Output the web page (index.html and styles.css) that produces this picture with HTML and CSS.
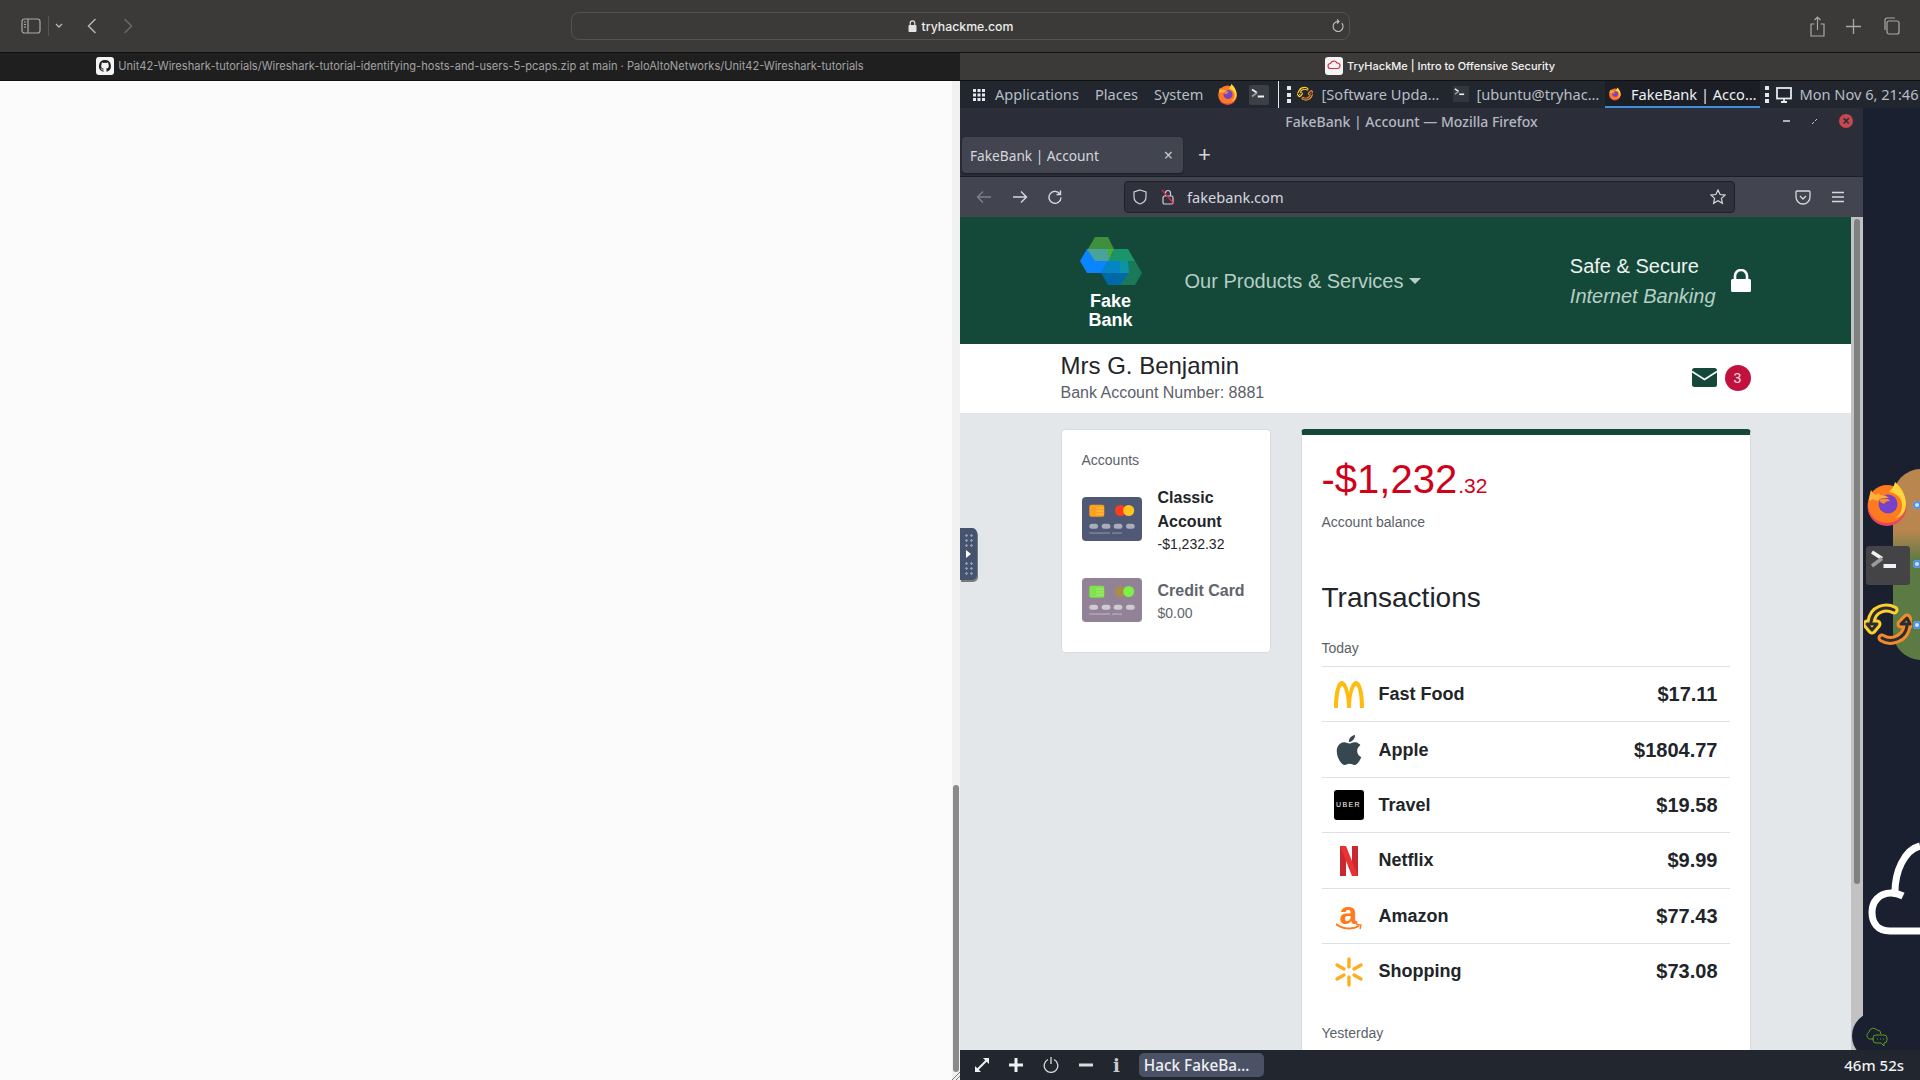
FILE: index.html
```html
<!DOCTYPE html>
<html lang="en">
<head>
    <meta charset="UTF-8">
    <meta name="viewport" content="width=device-width, initial-scale=1.0">
    <title>FakeBank | Account</title>
    <link rel="stylesheet" href="styles.css">
</head>
<body>
    <svg class="defs" width="0" height="0">
        <symbol id="firefox" viewBox="0 0 42 44">
            <circle cx="20" cy="24.500" r="19.500" fill="#e8475f"/>
            <circle cx="20" cy="22" r="19" fill="#ff7a1f"/>
            <path d="M28 0c-1 5-4 8-6 10 8 1 14 7 13 15-.5 5-3 9-7 11 7-1 11-7 11-14 0-9-5-17-11-22z" fill="#ffd53d"/>
            <circle cx="21" cy="22" r="9.500" fill="#7542c9"/>
            <path d="M4 8c-1 3-2 7-2 11 3-2 5-2 8 0 3-3 8-4 12-3-2-2-5-3-9-3l-1-2-3 2c-2-1-4-3-5-5z" fill="#ffb03a"/>
            <path d="M12 18c4-2 9-2 11 1-3 0-5 1-6 3-2-1-4-2-5-4z" fill="#ff8a24"/>
        </symbol>
        <symbol id="term" viewBox="0 0 36 28">
            <path d="M2 2l10 6.500" fill="none" stroke="#f2f2f2" stroke-width="3.600"/>
            <path d="M12 8.500L2 16" fill="none" stroke="#9a9a9a" stroke-width="3.600"/>
            <rect x="13.500" y="14" width="12.500" height="4" fill="#f2f2f2"/>
        </symbol>
        <symbol id="sync" viewBox="0 0 48 44">
            <g fill="none" stroke="#ffcf2e" stroke-width="9" stroke-linejoin="round" stroke-linecap="round">
                <path d="M30 7C22 3 9 5 7 19"/>
                <path d="M3 21l5 6 5-6z"/>
            </g>
            <g fill="none" stroke="#f58a2c" stroke-width="9" stroke-linejoin="round" stroke-linecap="round">
                <path d="M18 35c8 5 23 2 25-12"/>
                <path d="M37 21l6-6 3 6z"/>
            </g>
            <g fill="none" stroke="#2b2d33" stroke-width="3" stroke-linejoin="round" stroke-linecap="round">
                <path d="M30 7C22 3 9 5 7 19"/>
                <path d="M3 21l5 6 5-6z"/>
                <path d="M18 35c8 5 23 2 25-12"/>
                <path d="M37 21l6-6 3 6z"/>
            </g>
        </symbol>
    </svg>

    <header class="safari-bar">
        <div class="safari-left">
            <svg class="ic-sidebar" width="20" height="16" viewBox="0 0 20 16" fill="none" stroke="#a9a8a5" stroke-width="1.2"><rect x="1" y="1" width="18" height="14" rx="2.5"/><path d="M7 1v14M3 4h2M3 6.5h2M3 9h2"/></svg>
            <span class="safari-sep"></span>
            <svg width="8" height="6" viewBox="0 0 8 6" fill="none" stroke="#b4b3b0" stroke-width="1.4"><path d="M1 1l3 3 3-3"/></svg>
            <svg class="ic-back" width="10" height="16" viewBox="0 0 10 16" fill="none" stroke="#b4b3b0" stroke-width="1.5"><path d="M8.500 1L1.500 8l7 7"/></svg>
            <svg class="ic-forward" width="10" height="16" viewBox="0 0 10 16" fill="none" stroke="#6a6967" stroke-width="1.5"><path d="M1.500 1l7 7-7 7"/></svg>
        </div>
        <div class="safari-url">
            <svg width="9" height="12" viewBox="0 0 9 12" fill="none"><rect x="0.500" y="5" width="8" height="7" rx="1" fill="#e4e4e2"/><path d="M2.200 5V3.200a2.300 2.300 0 0 1 4.600 0V5" stroke="#e4e4e2" stroke-width="1.100"/></svg>
            <span class="safari-host">tryhackme.com</span>
            <svg class="ic-reload" width="12" height="14" viewBox="0 0 12 14" fill="none" stroke="#c4c3c0" stroke-width="1.100"><path d="M9.800 4.200A5 5 0 1 1 6 2.500"/><path d="M5 .5l2 2-2 2"/></svg>
        </div>
        <div class="safari-right">
            <svg width="15" height="21" viewBox="0 0 15 21" fill="none" stroke="#a9a8a5" stroke-width="1.200"><path d="M4.500 8H1v12h13V8h-3.500M7.500 14V1M4.500 4l3-3 3 3"/></svg>
            <svg width="15" height="15" viewBox="0 0 15 15" fill="none" stroke="#a9a8a5" stroke-width="1.300"><path d="M7.500 0v15M0 7.500h15"/></svg>
            <svg width="18" height="18" viewBox="0 0 18 18" fill="none" stroke="#a9a8a5" stroke-width="1.200"><rect x="5" y="4" width="12" height="13" rx="2"/><path d="M3 13V3a2 2 0 0 1 2-2h8"/></svg>
        </div>
    </header>

    <div class="safari-tabs">
        <div class="stab stab-dark">
            <span class="gh-icon">
                <svg width="12" height="12" viewBox="0 0 16 16" fill="#1f1f1f"><path d="M8 0a8 8 0 0 0-2.500 15.600c.4.100.5-.2.500-.4v-1.400c-2.200.5-2.700-1-2.700-1-.4-.9-.9-1.200-.9-1.200-.7-.5.100-.5.100-.5.800.1 1.200.8 1.200.8.700 1.200 1.900.9 2.300.7.100-.5.300-.9.500-1.100-1.800-.2-3.600-.9-3.600-4 0-.9.300-1.600.8-2.100-.1-.2-.4-1 .1-2.100 0 0 .7-.2 2.200.8a7.600 7.600 0 0 1 4 0c1.500-1 2.200-.8 2.200-.8.400 1.100.2 1.900.1 2.100.5.600.8 1.300.8 2.100 0 3.100-1.900 3.700-3.700 3.900.3.300.6.800.6 1.500v2.200c0 .2.100.5.600.4A8 8 0 0 0 8 0z"/></svg>
            </span>
            <span>Unit42-Wireshark-tutorials/Wireshark-tutorial-identifying-hosts-and-users-5-pcaps.zip at main · PaloAltoNetworks/Unit42-Wireshark-tutorials</span>
        </div>
        <div class="stab stab-light">
            <span class="thm-icon">
                <svg width="14" height="14" viewBox="0 0 14 14" fill="none" stroke="#d2333f" stroke-width="1.200"><path d="M3.500 9.500a2.500 2.500 0 0 1 0-5 3.500 3.500 0 0 1 6.500-.5 2.700 2.700 0 0 1 .5 5.500z"/></svg>
            </span>
            <span>TryHackMe | Intro to Offensive Security</span>
        </div>
    </div>

    <main class="split">
        <section class="left-pane">
            <div class="left-scroll"><div class="left-thumb"></div></div>
            <svg class="grip" width="8" height="8" viewBox="0 0 8 8" stroke="#555" stroke-width="0.800"><path d="M0 8l8-8M4 8l4-4"/></svg>
        </section>

        <section class="vm">
            <div class="panel">
                <div class="panel-menu">
                    <svg width="12" height="12" viewBox="0 0 12 12" fill="#e6e8ec"><rect width="3" height="3"/><rect x="4.500" width="3" height="3"/><rect x="9" width="3" height="3"/><rect y="4.500" width="3" height="3"/><rect x="4.500" y="4.500" width="3" height="3"/><rect x="9" y="4.500" width="3" height="3"/><rect y="9" width="3" height="3"/><rect x="4.500" y="9" width="3" height="3"/><rect x="9" y="9" width="3" height="3"/></svg>
                    <span class="pm-item">Applications</span>
                    <span class="pm-item">Places</span>
                    <span class="pm-item">System</span>
                    <svg class="pm-ff" width="20" height="21"><use href="#firefox"/></svg>
                    <span class="pm-term"><svg width="19" height="15"><use href="#term"/></svg></span>
                </div>
                <span class="panel-div"></span>
                <span class="handle"></span>
                <div class="task task-first">
                    <svg width="16" height="16"><use href="#sync"/></svg>
                    <span>[Software Upda…</span>
                </div>
                <div class="task">
                    <span class="task-term"><svg width="14" height="11"><use href="#term"/></svg></span>
                    <span>[ubuntu@tryhac…</span>
                </div>
                <div class="task task-active">
                    <svg width="17" height="18"><use href="#firefox"/></svg>
                    <span>FakeBank | Acco…</span>
                </div>
                <span class="handle handle-end"></span>
                <svg class="monitor" width="16" height="16" viewBox="0 0 16 16" fill="none" stroke="#e6e8ec" stroke-width="1.800"><rect x="1" y="1" width="14" height="10.500"/><path d="M5 15h6M8 12v3"/></svg>
                <span class="clock">Mon Nov 6, 21:46</span>
            </div>

            <div class="desktop">
                <div class="ff-window">
                    <div class="ff-title">
                        <span>FakeBank | Account — Mozilla Firefox</span>
                        <div class="ff-controls">
                            <span class="ctl-min"></span>
                            <svg width="7" height="7" viewBox="0 0 7 7" stroke="#c5c8d0" fill="none"><path d="M1 6l2-2M6 1L4 3"/></svg>
                            <span class="ctl-close">×</span>
                        </div>
                    </div>
                    <div class="ff-tabs">
                        <div class="ff-tab"><span>FakeBank | Account</span><span class="ff-tab-x">×</span></div>
                        <span class="ff-plus">+</span>
                    </div>
                    <div class="ff-nav">
                        <svg width="16" height="14" viewBox="0 0 16 14" fill="none" stroke="#7c808c" stroke-width="1.400"><path d="M15 7H2M7 1.500L1.500 7 7 12.500"/></svg>
                        <svg width="16" height="14" viewBox="0 0 16 14" fill="none" stroke="#d6d8de" stroke-width="1.400"><path d="M1 7h13M9 1.500L14.500 7 9 12.500"/></svg>
                        <svg width="14" height="14" viewBox="0 0 14 14" fill="none" stroke="#d6d8de" stroke-width="1.400"><path d="M12 4A6 6 0 1 0 13 7.500"/><path d="M12.500 .5v4h-4"/></svg>
                        <div class="ff-url">
                            <svg width="14" height="16" viewBox="0 0 14 16" fill="none" stroke="#cfd1d8" stroke-width="1.200"><path d="M7 1l6 2v5c0 3.500-3 6-6 7-3-1-6-3.500-6-7V3z"/></svg>
                            <svg class="ic-lock" width="14" height="16" viewBox="0 0 14 16" fill="none" stroke="#cfd1d8" stroke-width="1.200"><rect x="2" y="7" width="10" height="8" rx="1.500"/><path d="M4.500 7V4a2.500 2.500 0 0 1 5 0v3"/><path d="M1 1l12 14" stroke="#e0284f"/></svg>
                            <span class="ff-host">fakebank.com</span>
                            <svg class="ic-star" width="16" height="16" viewBox="0 0 16 16" fill="none" stroke="#d6d8de" stroke-width="1.200"><path d="M8 1l2.100 4.500 4.900.6-3.600 3.300 1 4.900L8 11.800 3.600 14.300l1-4.900L1 6.100l4.900-.6z"/></svg>
                        </div>
                        <svg class="ic-pocket" width="16" height="15" viewBox="0 0 16 15" fill="none" stroke="#d6d8de" stroke-width="1.300"><path d="M2 1h12a1 1 0 0 1 1 1v5a7 7 0 0 1-14 0V2a1 1 0 0 1 1-1z"/><path d="M5 6l3 3 3-3"/></svg>
                        <svg width="14" height="12" viewBox="0 0 14 12" stroke="#d6d8de" stroke-width="1.300"><path d="M1 1.500h12M1 6h12M1 10.500h12"/></svg>
                    </div>

                    <div class="ff-view">
                        <div class="page">
                            <div class="bank-head">
                                <div class="wrap head-row">
                                    <div class="brand">
                                        <svg class="brand-logo" width="64" height="49" viewBox="0 0 64 49">
                                            <polygon points="9,12 16,0 29,0 35,12 29,24 16,24" fill="#3f8f3c"/>
                                            <polygon points="1,24 8,12 29,12 35,24 29,36 8,36" fill="#0a84ff"/>
                                            <polygon points="8,12 29,12 35,12 29,24 16,24" fill="#4aa29c"/>
                                            <polygon points="29,12 35,12 29,24" fill="#4fae30"/>
                                            <polygon points="29,12 49,12 56,24 50,36 30,24 35,12" fill="#1a9468"/>
                                            <polygon points="22,36 29,24 49,24 57,36 50,48 29,48" fill="#0069a8"/>
                                            <polygon points="29,24 49,24 41,36 22,36" fill="#0585c4"/>
                                            <polygon points="41,24 49,24 56,36 50,36 41,36" fill="#0c93a8"/>
                                            <polygon points="49,24 56,24 63,36 56,48 41,48 50,36" fill="#1a7a58"/>
                                        </svg>
                                        <div class="brand-name">Fake<br>Bank</div>
                                    </div>
                                    <div class="products">Our Products &amp; Services<span class="caret"></span></div>
                                    <div class="secure">
                                        <div class="secure-text">
                                            <div>Safe &amp; Secure</div>
                                            <div class="secure-em">Internet Banking</div>
                                        </div>
                                        <svg width="20" height="23" viewBox="0 0 20 23" fill="none"><rect y="10" width="20" height="13" rx="1.500" fill="#fff"/><path d="M4 11V7a6 6 0 0 1 12 0v4" stroke="#fff" stroke-width="2.600"/></svg>
                                    </div>
                                </div>
                            </div>

                            <div class="user-bar">
                                <div class="wrap user-row">
                                    <div>
                                        <div class="user-name">Mrs G. Benjamin</div>
                                        <div class="user-acc">Bank Account Number: 8881</div>
                                    </div>
                                    <div class="messages">
                                        <svg width="25" height="19" viewBox="0 0 25 19"><rect width="25" height="19" rx="2.500" fill="#14493a"/><path d="M0 3.500l12.500 8 12.500-8" fill="none" stroke="#fff" stroke-width="1.600"/></svg>
                                        <span class="badge">3</span>
                                    </div>
                                </div>
                            </div>

                            <div class="wrap main-row">
                                <aside class="accounts">
                                    <div class="accounts-title">Accounts</div>
                                    <div class="account">
                                        <svg class="card-ic" width="60" height="44" viewBox="0 0 60 44">
                                            <rect width="60" height="44" rx="4" fill="#4f5874"/>
                                            <rect x="7.300" y="7.700" width="15" height="12" rx="2" fill="#ff9f1c"/>
                                            <path d="M14 11h8M14 14h8M14 17h8" stroke="#ffc94d"/>
                                            <circle cx="38.500" cy="13.500" r="5.500" fill="#ff3d1f"/>
                                            <circle cx="46.700" cy="13.500" r="5.500" fill="#ffc41f"/>
                                            <rect x="7.300" y="26.700" width="8.700" height="5" rx="2.500" fill="#a9adb8"/>
                                            <rect x="19.700" y="26.700" width="8.700" height="5" rx="2.500" fill="#a9adb8"/>
                                            <rect x="31.700" y="26.700" width="8.700" height="5" rx="2.500" fill="#a9adb8"/>
                                            <rect x="44" y="26.700" width="8.700" height="5" rx="2.500" fill="#a9adb8"/>
                                            <rect x="7.300" y="35.300" width="20.700" height="1.500" fill="#7f8598"/>
                                            <rect x="30" y="35.300" width="10" height="1.500" fill="#7f8598"/>
                                        </svg>
                                        <div>
                                            <div class="account-name">Classic Account</div>
                                            <div class="account-bal">-$1,232.32</div>
                                        </div>
                                    </div>
                                    <div class="account account-off">
                                        <svg class="card-ic" width="60" height="44" viewBox="0 0 60 44">
                                            <rect width="60" height="44" rx="4" fill="#918296"/>
                                            <rect x="7.300" y="7.700" width="15" height="12" rx="2" fill="#7fe34a"/>
                                            <path d="M14 11h8M14 14h8M14 17h8" stroke="#a6ee7c"/>
                                            <circle cx="38.500" cy="13.500" r="5.500" fill="#a98c48"/>
                                            <circle cx="46.700" cy="13.500" r="5.500" fill="#7dee4a"/>
                                            <rect x="7.300" y="26.700" width="8.700" height="5" rx="2.500" fill="#cfc9d2"/>
                                            <rect x="19.700" y="26.700" width="8.700" height="5" rx="2.500" fill="#cfc9d2"/>
                                            <rect x="31.700" y="26.700" width="8.700" height="5" rx="2.500" fill="#cfc9d2"/>
                                            <rect x="44" y="26.700" width="8.700" height="5" rx="2.500" fill="#cfc9d2"/>
                                            <rect x="7.300" y="35.300" width="20.700" height="1.500" fill="#b3a9b8"/>
                                            <rect x="30" y="35.300" width="10" height="1.500" fill="#b3a9b8"/>
                                        </svg>
                                        <div>
                                            <div class="account-name">Credit Card</div>
                                            <div class="account-bal">$0.00</div>
                                        </div>
                                    </div>
                                </aside>

                                <section class="ledger">
                                    <div class="balance">-$1,232<small>.32</small></div>
                                    <div class="balance-label">Account balance</div>
                                    <h2 class="ledger-title">Transactions</h2>
                                    <div class="day">Today</div>
                                    <div class="tx">
                                        <svg class="tx-ic" width="30" height="27" viewBox="0 0 30 27"><path d="M0 27C0 10 3 0 8 0c3 0 6 5 7 12 1-7 4-12 7-12 5 0 8 10 8 27h-4C26 15 24 5 22 5c-2 0-5 9-5 22h-4C13 14 10 5 8 5 6 5 4 15 4 27z" fill="#ffbc0d"/></svg>
                                        <span class="tx-name">Fast Food</span>
                                        <span class="tx-amt">$17.11</span>
                                    </div>
                                    <div class="tx">
                                        <svg class="tx-ic" width="30" height="30" viewBox="0 0 24 24"><path d="M12.152 6.896c-.948 0-2.415-1.078-3.960-1.040-2.040.027-3.910 1.183-4.961 3.014-2.117 3.675-.546 9.103 1.519 12.090 1.013 1.454 2.208 3.090 3.792 3.039 1.520-.065 2.090-.987 3.935-.987 1.831 0 2.350.987 3.960.948 1.637-.026 2.676-1.480 3.676-2.948 1.156-1.688 1.636-3.325 1.662-3.415-.039-.013-3.182-1.221-3.220-4.857-.026-3.040 2.480-4.494 2.597-4.559-1.429-2.090-3.623-2.324-4.390-2.376-2-.156-3.675 1.090-4.610 1.090zM15.530 3.830c.843-1.012 1.400-2.427 1.245-3.830-1.207.052-2.662.805-3.532 1.818-.780.896-1.454 2.338-1.273 3.714 1.338.104 2.715-.688 3.559-1.701" fill="#36474f"/></svg>
                                        <span class="tx-name">Apple</span>
                                        <span class="tx-amt">$1804.77</span>
                                    </div>
                                    <div class="tx">
                                        <span class="tx-ic uber">UBER</span>
                                        <span class="tx-name">Travel</span>
                                        <span class="tx-amt">$19.58</span>
                                    </div>
                                    <div class="tx">
                                        <svg class="tx-ic" width="30" height="30" viewBox="0 0 30 30"><rect x="6" width="6" height="30" fill="#c62a30"/><rect x="18" width="6" height="30" fill="#c62a30"/><polygon points="6,0 12,0 24,30 18,30" fill="#ea3232"/></svg>
                                        <span class="tx-name">Netflix</span>
                                        <span class="tx-amt">$9.99</span>
                                    </div>
                                    <div class="tx">
                                        <span class="tx-ic amazon">a<svg class="amazon-smile" width="26" height="8" viewBox="0 0 26 8" fill="none" stroke="#ff7a1c" stroke-width="1.800"><path d="M0 1c6 5 16 6 23 2"/><path d="M20 1.500l5 .5-1 4" stroke-width="1.400"/></svg></span>
                                        <span class="tx-name">Amazon</span>
                                        <span class="tx-amt">$77.43</span>
                                    </div>
                                    <div class="tx">
                                        <svg class="tx-ic" width="30" height="30" viewBox="0 0 30 30" stroke="#ffad1f" stroke-width="3.400" stroke-linecap="round"><path d="M15 2v8M15 20v8M3 8l7 4M20 18l7 4M27 8l-7 4M10 18l-7 4"/></svg>
                                        <span class="tx-name">Shopping</span>
                                        <span class="tx-amt">$73.08</span>
                                    </div>
                                    <div class="day day-next">Yesterday</div>
                                </section>
                            </div>

                            <div class="side-handle">
                                <span class="side-dots"></span>
                                <span class="side-arrow"></span>
                                <span class="side-dots"></span>
                            </div>
                        </div>
                        <div class="page-scroll"><div class="page-thumb"></div></div>
                    </div>
                </div>

                <aside class="dock">
                    <div class="dock-blob"></div>
                    <svg class="dock-ff" width="42" height="44"><use href="#firefox"/></svg>
                    <span class="dock-term"><svg width="36" height="28"><use href="#term"/></svg></span>
                    <svg class="dock-sync" width="48" height="44"><use href="#sync"/></svg>
                    <span class="dock-dot dot-a"></span>
                    <span class="dock-dot dot-b"></span>
                    <span class="dock-dot dot-c"></span>
                    <svg class="dock-cloud" width="52" height="94" viewBox="0 0 52 94" fill="none" stroke="#fff" stroke-width="7"><path d="M52 89H22C9 89 4 80 4 70c0-10 7-19 19-19 3 0 8 1 12 3M27 50C27 30 36 8 52 4"/></svg>
                    <div class="chat">
                        <svg width="24" height="22" viewBox="0 0 24 22" fill="none" stroke="#5c9c1e" stroke-width="1"><path d="M5 13a4 4 0 0 1 0-7 4.500 4.500 0 0 1 8-2 4 4 0 0 1 4 4M5 13h5"/><path d="M12 9h8a3 3 0 0 1 3 3v2a3 3 0 0 1-3 3v3l-3-3h-5a3 3 0 0 1-3-3v-2a3 3 0 0 1 3-3z"/><path d="M13 13h1M16 13h1M19 13h1"/></svg>
                    </div>
                </aside>
            </div>

            <div class="vm-bar">
                <svg width="16" height="16" viewBox="0 0 16 16" fill="none" stroke="#eef0f3" stroke-width="2"><path d="M2 14L14 2"/><polygon points="9,1 15,1 15,7" fill="#eef0f3" stroke="none"/><polygon points="1,9 1,15 7,15" fill="#eef0f3" stroke="none"/></svg>
                <svg class="ic-add" width="14" height="14" viewBox="0 0 14 14" stroke="#eef0f3" stroke-width="3"><path d="M7 0v14M0 7h14"/></svg>
                <svg width="16" height="16" viewBox="0 0 16 16" fill="none" stroke="#d9dbe0" stroke-width="1.300"><path d="M5 2.500a6.800 6.800 0 1 0 6 0M8 0v7"/></svg>
                <svg width="14" height="14" viewBox="0 0 14 14" stroke="#d9dbe0" stroke-width="3"><path d="M0 7h14"/></svg>
                <span class="vm-info">i</span>
                <span class="vm-pill">Hack FakeBa…</span>
                <span class="vm-time">46m 52s</span>
            </div>
        </section>
    </main>
</body>
</html>
```

FILE: styles.css
```css
/* Global */
* {
    margin: 0;
    padding: 0;
    box-sizing: border-box;
}

html, body {
    height: 100%;
    overflow: hidden;
}

body {
    display: flex;
    flex-direction: column;
    font-family: 'Liberation Sans', Arial, sans-serif;
    background: #3b3a38;
}

.defs {
    position: absolute;
}

/* Safari chrome */
.safari-bar {
    height: 52px;
    display: flex;
    align-items: center;
    background: #3b3a38;
    position: relative;
}

.safari-left {
    display: flex;
    align-items: center;
    margin-left: 21px;
    width: 550px;
}

.safari-sep {
    width: 1px;
    height: 20px;
    background: #555;
    margin: 0 6px 0 7px;
}

.ic-back {
    margin-left: 24px;
}

.ic-forward {
    margin-left: 26px;
}

.safari-url {
    width: 779px;
    height: 28px;
    border: 1px solid #545350;
    border-radius: 8px;
    display: flex;
    align-items: center;
    justify-content: center;
    gap: 5px;
    position: relative;
}

.safari-host {
    color: #ececea;
    font-family: Inter, sans-serif;
    font-size: 12.300px;
    font-weight: 500;
}

.ic-reload {
    position: absolute;
    right: 5px;
    top: 6px;
}

.safari-right {
    margin-left: auto;
    margin-right: 20px;
    display: flex;
    align-items: center;
    gap: 21px;
}

.safari-tabs {
    height: 29px;
    display: flex;
    border-top: 1px solid #111;
    border-bottom: 1px solid #111;
}

.stab {
    width: 960px;
    padding-bottom: 1px;
    display: flex;
    align-items: center;
    justify-content: center;
    gap: 4px;
    font-family: Inter, sans-serif;
    font-size: 11.100px;
}

.stab-dark {
    background: #1f1f1f;
    color: #a3a3a3;
}

.stab-light {
    background: #3b3a38;
    color: #f2f2f2;
    font-weight: 500;
    font-size: 11px;
}

.gh-icon, .thm-icon {
    width: 18px;
    height: 18px;
    background: #f4f4f4;
    border-radius: 3px;
    display: flex;
    align-items: center;
    justify-content: center;
}

.split {
    flex: 1;
    display: flex;
    min-height: 0;
}

/* Left pane */
.left-pane {
    width: 960px;
    background: #fbfbfb;
    display: flex;
    justify-content: flex-end;
    position: relative;
}

.left-scroll {
    width: 8px;
    background: #f1f1f1;
    padding: 704px 1px 8px;
}

.left-thumb {
    height: 100%;
    background: #8a8a8a;
    border-radius: 3px;
}

.grip {
    position: absolute;
    right: 0;
    bottom: 0;
}

/* VM desktop */
.vm {
    width: 960px;
    display: flex;
    flex-direction: column;
    background: #1a2030;
    position: relative;
}

.panel {
    height: 27px;
    display: flex;
    align-items: center;
    background: #22262e;
    color: #b9bdc6;
    font-family: 'Noto Sans', sans-serif;
    font-size: 14.600px;
    white-space: nowrap;
}

.panel-menu {
    display: flex;
    align-items: center;
    margin-left: 13px;
}

.pm-item {
    margin: -2px 6px 0 10px;
}

.pm-ff {
    margin-left: 9px;
}

.pm-term {
    width: 20px;
    height: 20px;
    margin-left: 11px;
    padding: 3px 0 0 2px;
    background: #3c3f46;
    border-radius: 2px;
    display: flex;
    align-items: flex-start;
}

.panel-div {
    width: 1px;
    height: 27px;
    background: #e6e8ec;
    margin-left: 9px;
}

.handle {
    width: 4px;
    height: 17px;
    margin-left: 8px;
    background: repeating-linear-gradient(to bottom, #e6e8ec 0, #e6e8ec 4px, transparent 4px, transparent 6.500px);
}

.task {
    display: flex;
    align-items: center;
    gap: 7px;
    width: 156px;
    height: 27px;
    padding: 0 4px 2px;
    flex: none;
}

.task-first {
    margin-left: 2px;
    gap: 8px;
}

.task-term {
    width: 16px;
    height: 16px;
    padding: 2px 0 0 1px;
    background: #33363e;
    display: flex;
    align-items: flex-start;
}

.task-active {
    width: 155px;
    padding-bottom: 0;
    color: #eef0f3;
    background: #1b1e25;
    border-bottom: 2px solid #3f8fe0;
    gap: 9px;
}

.handle-end {
    margin-left: 5px;
}

.monitor {
    margin-left: 7px;
}

.clock {
    margin: -2px 0 0 7px;
}

.desktop {
    flex: 1;
    display: flex;
    min-height: 0;
}

/* Firefox window */
.ff-window {
    width: 903px;
    display: flex;
    flex-direction: column;
    background: #2b2e39;
}

.ff-title {
    height: 29px;
    padding-bottom: 2px;
    display: flex;
    align-items: center;
    justify-content: center;
    color: #b5b8c2;
    font-family: 'Noto Sans', sans-serif;
    font-size: 14px;
    font-weight: 500;
    position: relative;
}

.ff-controls {
    position: absolute;
    right: 10px;
    top: 6px;
    display: flex;
    align-items: center;
    gap: 21px;
}

.ctl-min {
    width: 7px;
    height: 2px;
    background: #aeb1ba;
}

.ctl-close {
    width: 14px;
    height: 14px;
    border-radius: 50%;
    background: #c9474f;
    color: #2b2e39;
    font-size: 14px;
    line-height: 14px;
    text-align: center;
    font-weight: bold;
}

.ff-tabs {
    height: 40px;
    display: flex;
    align-items: flex-start;
    border-bottom: 1px solid #1c1e25;
}

.ff-tab {
    width: 221px;
    height: 36px;
    margin-left: 2px;
    background: #42454f;
    border-radius: 4px;
    box-shadow: 0 1px 2px rgba(0, 0, 0, 0.4);
    display: flex;
    align-items: center;
    justify-content: space-between;
    padding: 0 10px 0 8px;
    color: #d5d7dd;
    font-family: 'Noto Sans', sans-serif;
    font-size: 13.700px;
}

.ff-tab-x {
    font-size: 16px;
    color: #c9cbd2;
}

.ff-plus {
    margin-left: 15px;
    color: #d5d7dd;
    font-size: 22px;
    line-height: 36px;
    font-weight: 300;
}

.ff-nav {
    height: 40px;
    display: flex;
    align-items: center;
    background: #42454f;
    padding-left: 16px;
    gap: 20px;
}

.ff-url {
    width: 611px;
    height: 32px;
    margin-left: 42px;
    background: #2f323d;
    border: 1px solid #1f2129;
    border-radius: 4px;
    display: flex;
    align-items: center;
    padding: 0 8px;
    gap: 8px;
    color: #d5d7dd;
    font-family: 'Noto Sans', sans-serif;
    font-size: 14.600px;
}

.ic-lock {
    margin-left: 6px;
}

.ff-host {
    margin-left: 4px;
}

.ic-star {
    margin-left: auto;
}

.ic-pocket {
    margin-left: 40px;
}

.ff-view {
    flex: 1;
    display: flex;
    min-height: 0;
}

.page {
    flex: 1;
    background: #e4e7ea;
    overflow: hidden;
    position: relative;
}

.page-scroll {
    width: 12px;
    background: #c2c2c2;
    padding: 2px 3px 166px;
}

.page-thumb {
    height: 100%;
    background: #7e8180;
    border-radius: 3px;
}

/* Bank page */
.wrap {
    width: 690px;
    margin: 0 auto;
}

.bank-head {
    height: 127px;
    background: #14493a;
}

.head-row {
    display: flex;
    align-items: center;
    height: 100%;
}

.brand {
    width: 100px;
    display: flex;
    flex-direction: column;
    align-items: center;
    padding-top: 5px;
}

.brand-name {
    margin-top: 6px;
    color: #fff;
    font-size: 18px;
    font-weight: bold;
    line-height: 19px;
    text-align: center;
}

.products {
    margin: 2px 0 0 24px;
    color: #b6cfc4;
    font-size: 20px;
}

.caret {
    display: inline-block;
    margin-left: 6px;
    vertical-align: 4px;
    border-top: 6px solid #b6cfc4;
    border-left: 6px solid transparent;
    border-right: 6px solid transparent;
}

.secure {
    margin-left: auto;
    display: flex;
    align-items: center;
    gap: 15px;
}

.secure-text {
    color: #eef3f0;
    font-size: 20px;
    line-height: 30px;
}

.secure-em {
    font-style: italic;
    color: #b6cfc4;
}

.user-bar {
    height: 69px;
    background: #fff;
}

.user-row {
    height: 100%;
    padding-bottom: 1px;
    display: flex;
    align-items: center;
    justify-content: space-between;
}

.user-name {
    font-size: 24px;
    line-height: 30px;
    color: #212529;
}

.user-acc {
    font-size: 16px;
    line-height: 24px;
    color: #5b6169;
}

.messages {
    display: flex;
    align-items: center;
    gap: 8px;
    margin-top: -1px;
}

.badge {
    width: 26px;
    height: 26px;
    border-radius: 50%;
    background: #c0123c;
    color: #f4dfe4;
    font-size: 14px;
    line-height: 26px;
    text-align: center;
}

.main-row {
    display: flex;
    align-items: flex-start;
    gap: 30px;
    padding-top: 16px;
}

.accounts {
    width: 210px;
    height: 224px;
    background: #fff;
    border: 1px solid #d8dce0;
    border-radius: 4px;
    padding: 22px 10px 0 20px;
}

.accounts-title {
    font-size: 14px;
    line-height: 16px;
    color: #5b6169;
    margin-bottom: 17.500px;
}

.account {
    display: flex;
    align-items: center;
    gap: 16px;
    margin-bottom: 25px;
}

.card-ic {
    flex: none;
    margin-top: -1px;
}

.account-name {
    font-size: 16px;
    font-weight: bold;
    line-height: 24px;
    color: #212529;
}

.account-bal {
    font-size: 14px;
    line-height: 20px;
    color: #212529;
}

.account-off .account-name,
.account-off .account-bal {
    color: #60656b;
}

.ledger {
    width: 450px;
    height: 760px;
    background: #fff;
    border: 1px solid #d8dce0;
    border-top: 6px solid #14493a;
    border-radius: 4px 4px 0 0;
    padding: 20px 20px 0;
}

.balance {
    font-size: 40px;
    line-height: 48px;
    color: #d0021b;
}

.balance small {
    margin-left: 1px;
    font-size: 21px;
}

.balance-label {
    margin-top: 1.500px;
    font-size: 14px;
    line-height: 20px;
    color: #5b6169;
}

.ledger-title {
    margin-top: 49px;
    font-size: 28px;
    font-weight: normal;
    line-height: 34px;
    color: #212529;
}

.day {
    margin-top: 23.500px;
    font-size: 14px;
    line-height: 20px;
    color: #5b6169;
    padding-bottom: 8px;
}

.day-next {
    margin-top: 25px;
}

.tx {
    height: 55.400px;
    border-top: 1px solid #dde1e5;
    display: flex;
    align-items: center;
    padding: 1px 12px 0 8px;
}

.tx-ic {
    flex: none;
    width: 30px;
    margin: 0 15px 0 4px;
}

.tx-name {
    font-size: 18px;
    font-weight: bold;
    color: #212529;
}

.tx-amt {
    margin-left: auto;
    font-size: 20px;
    font-weight: bold;
    color: #212529;
}

.uber {
    height: 30px;
    background: #000;
    border-radius: 3px;
    color: #fff;
    font-size: 7px;
    line-height: 30px;
    letter-spacing: 1.400px;
    text-align: center;
}

.amazon {
    height: 30px;
    color: #ff7a1c;
    font-size: 32px;
    font-weight: bold;
    line-height: 24px;
    text-align: center;
    position: relative;
}

.amazon-smile {
    position: absolute;
    left: 2px;
    bottom: 0;
}

/* Collapsed side handle of the remote desktop */
.side-handle {
    position: absolute;
    left: 0;
    top: 311px;
    width: 17px;
    height: 52px;
    background: #46536f;
    border-radius: 0 5px 5px 0;
    box-shadow: 1px 2px 0 #777c80;
    display: flex;
    flex-direction: column;
    align-items: center;
    justify-content: space-between;
    padding: 5px 0;
}

.side-dots {
    width: 10px;
    height: 14px;
    background: radial-gradient(circle, #8d97ad 1px, transparent 1.500px) 0 0 / 5px 5px;
}

.side-arrow {
    border-left: 5px solid #fff;
    border-top: 4px solid transparent;
    border-bottom: 4px solid transparent;
}

/* Desktop icons on the right */
.dock {
    flex: 1;
    position: relative;
}

.dock-blob {
    position: absolute;
    left: 30px;
    top: 361px;
    width: 60px;
    height: 191px;
    border-radius: 28px 0 0 28px;
    background: linear-gradient(to bottom, #b98650 0, #b98650 32%, #5c7a44 48%, #5c7a44 100%);
}

.dock-ff {
    position: absolute;
    left: 4px;
    top: 374px;
}

.dock-term {
    position: absolute;
    left: 3px;
    top: 438px;
    width: 44px;
    height: 39px;
    padding: 4px 0 0 4px;
    background: #444446;
    border-radius: 3px;
    display: flex;
    align-items: flex-start;
}

.dock-sync {
    position: absolute;
    left: 1px;
    top: 495px;
}

.dock-dot {
    position: absolute;
    left: 50px;
    width: 8px;
    height: 8px;
    border-radius: 50%;
    background: #cfe3fb;
    box-shadow: inset 0 0 0 2px #4f8fe6;
}

.dot-a { top: 393px; }
.dot-b { top: 452px; }
.dot-c { top: 513px; }

.dock-cloud {
    position: absolute;
    left: 5px;
    top: 734px;
}

.chat {
    position: absolute;
    left: -11px;
    top: 904px;
    width: 48px;
    height: 48px;
    border-radius: 50%;
    background: #1a2030;
    display: flex;
    justify-content: center;
    padding-top: 14px;
}

/* Bottom bar */
.vm-bar {
    height: 30px;
    display: flex;
    align-items: center;
    background: #22262e;
    padding-left: 14px;
    gap: 20px;
    position: relative;
}

.ic-add {
    margin-left: -1px;
}

.vm-info {
    color: #c9cbd2;
    font-family: 'DejaVu Serif', serif;
    font-size: 18px;
    font-weight: bold;
}

.vm-pill {
    margin-left: -1px;
    width: 125px;
    height: 24px;
    background: #4c5265;
    border-radius: 5px;
    color: #f0f1f4;
    font-family: 'Noto Sans', sans-serif;
    font-size: 15.300px;
    font-weight: 500;
    line-height: 24px;
    padding-left: 5px;
}

.vm-time {
    margin-left: auto;
    margin-right: 16px;
    color: #f0f1f4;
    font-family: 'Noto Sans', sans-serif;
    font-size: 15px;
    font-weight: 500;
}
```
